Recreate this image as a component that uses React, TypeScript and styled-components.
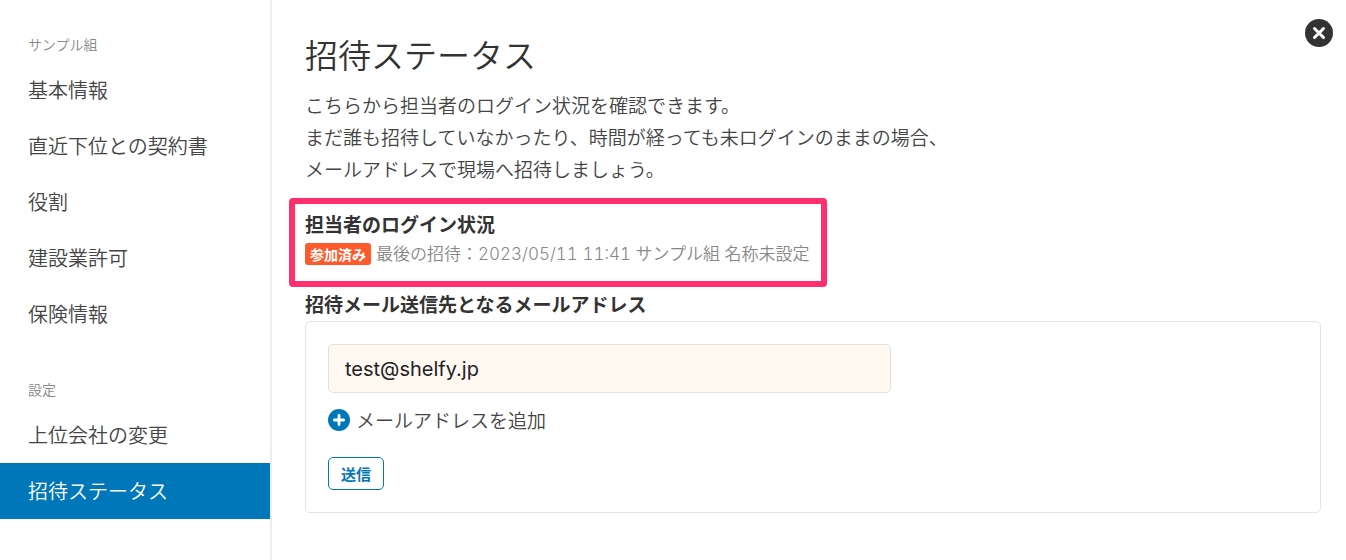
import React from "react";
import styled, { createGlobalStyle } from "styled-components";

const GlobalStyle = createGlobalStyle`
  *, *::before, *::after { box-sizing: border-box; }
  body {
    margin: 0;
    background: #fff;
    color: #444;
    font-family: "Noto Sans CJK JP", sans-serif;
    font-size: 19px;
    font-weight: 350;
    line-height: 32px;
  }
  h1, h2, p { margin: 0; }
  button, input { font-family: inherit; }
`;

const Layout = styled.div`
  position: relative;
  display: flex;
  min-height: 100vh;
`;

const Sidebar = styled.nav`
  flex: none;
  width: 272px;
  padding-top: 26px;
  display: flex;
  flex-direction: column;
  gap: 29px;
  border-right: 2px solid #eee;
`;

const GroupTitle = styled.h2`
  padding-left: 28px;
  color: #888;
  font-size: 14px;
  font-weight: 350;
  line-height: 36px;
`;

const NavItem = styled.a<{ $active?: boolean }>`
  display: block;
  padding-left: 28px;
  font-size: 20px;
  line-height: 56px;
  text-decoration: none;
  color: ${(p) => (p.$active ? "#fff" : "#444")};
  background: ${(p) => (p.$active ? "#0077b9" : "transparent")};
`;

const Main = styled.main`
  flex: 1;
  min-width: 0;
  padding: 34px 25px 40px 33px;
`;

const PageTitle = styled.h1`
  margin-bottom: 15px;
  color: #333;
  font-size: 33px;
  font-weight: 350;
  line-height: 40px;
`;

const Highlight = styled.section`
  width: fit-content;
  margin: 13px 0 0 -16px;
  padding: 6px 11px 12px 10px;
  border: 6px solid #ff2e6c;
  border-radius: 4px;
`;

const SectionTitle = styled.h2`
  color: #333;
  font-size: 19px;
  font-weight: 700;
  line-height: 28px;
`;

const StatusRow = styled.div`
  display: flex;
  align-items: center;
  gap: 5px;
  height: 31px;
`;

const Badge = styled.span`
  padding: 0 5px;
  border-radius: 3px;
  background: #ff5a2c;
  color: #fff;
  font-size: 14px;
  font-weight: 700;
  line-height: 22px;
`;

const StatusText = styled.span`
  color: #888;
  font-family: Inter, "Noto Sans CJK JP", sans-serif;
  font-size: 17px;
  font-variant-numeric: tabular-nums;
`;

const FormTitle = styled(SectionTitle)`
  margin: 3px 0;
`;

const Panel = styled.form`
  display: flex;
  flex-direction: column;
  align-items: flex-start;
  padding: 22px;
  border: 1px solid #e3e3e3;
  border-radius: 5px;
`;

const EmailInput = styled.input`
  width: 58%;
  height: 49px;
  padding: 0 16px;
  border: 1px solid #e3e0dd;
  border-radius: 5px;
  background: #fff9f2;
  color: #222;
  font-family: Inter, "Noto Sans CJK JP", sans-serif;
  font-size: 20px;
`;

const AddButton = styled.button`
  display: flex;
  align-items: center;
  gap: 6px;
  margin: 11px 0 21px;
  padding: 0;
  border: 0;
  background: none;
  color: #444;
  font-size: 19px;
  font-weight: 350;
  line-height: 32px;
  cursor: pointer;
`;

const SendButton = styled.button`
  padding: 0 12px;
  border: 1px solid #0077b9;
  border-radius: 5px;
  background: #fff;
  color: #0077b9;
  font-size: 15px;
  font-weight: 700;
  line-height: 31px;
  cursor: pointer;
`;

const CloseButton = styled.button`
  position: absolute;
  top: 19px;
  right: 13px;
  display: flex;
  padding: 0;
  border: 0;
  background: none;
  cursor: pointer;
`;

const company = ["基本情報", "直近下位との契約書", "役割", "建設業許可", "保険情報"];

export default function App() {
  return (
    <Layout>
      <GlobalStyle />
      <Sidebar>
        <div>
          <GroupTitle>サンプル組</GroupTitle>
          {company.map((label) => (
            <NavItem key={label} href="#">{label}</NavItem>
          ))}
        </div>
        <div>
          <GroupTitle>設定</GroupTitle>
          <NavItem href="#">上位会社の変更</NavItem>
          <NavItem href="#" $active aria-current="page">招待ステータス</NavItem>
        </div>
      </Sidebar>
      <Main>
        <PageTitle>招待ステータス</PageTitle>
        <p>
          こちらから担当者のログイン状況を確認できます。<br />
          まだ誰も招待していなかったり、時間が経っても未ログインのままの場合、<br />
          メールアドレスで現場へ招待しましょう。
        </p>
        <Highlight>
          <SectionTitle>担当者のログイン状況</SectionTitle>
          <StatusRow>
            <Badge>参加済み</Badge>
            <StatusText>最後の招待：2023/05/11 11:41 サンプル組 名称未設定</StatusText>
          </StatusRow>
        </Highlight>
        <FormTitle>
          <label htmlFor="email">招待メール送信先となるメールアドレス</label>
        </FormTitle>
        <Panel onSubmit={(e) => e.preventDefault()}>
          <EmailInput id="email" type="email" defaultValue="test@shelfy.jp" />
          <AddButton type="button">
            <svg width="22" height="22" viewBox="0 0 22 22" aria-hidden="true">
              <circle cx="11" cy="11" r="11" fill="#0077b9" />
              <path d="M11 6.4v9.2M6.4 11h9.2" stroke="#fff" strokeWidth="2.8" strokeLinecap="round" />
            </svg>
            メールアドレスを追加
          </AddButton>
          <SendButton type="submit">送信</SendButton>
        </Panel>
      </Main>
      <CloseButton type="button" aria-label="閉じる">
        <svg width="28" height="28" viewBox="0 0 28 28" aria-hidden="true">
          <circle cx="14" cy="14" r="14" fill="#333" />
          <path d="M9.5 9.5l9 9M18.5 9.5l-9 9" stroke="#fff" strokeWidth="3" strokeLinecap="round" />
        </svg>
      </CloseButton>
    </Layout>
  );
}
